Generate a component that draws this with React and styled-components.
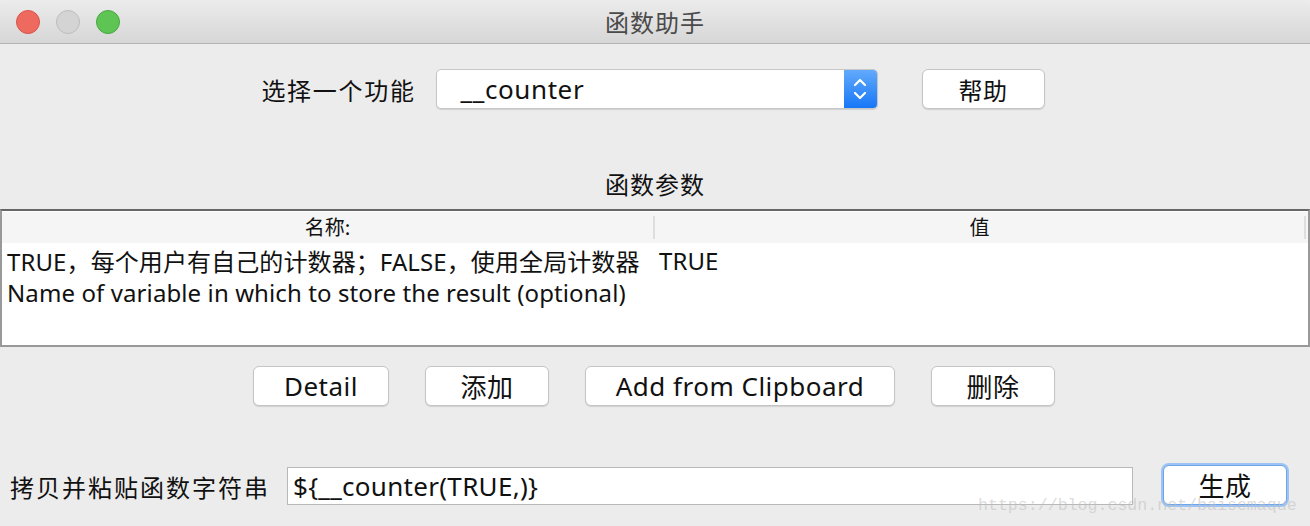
import React from "react";
import styled, { createGlobalStyle } from "styled-components";

const Global = createGlobalStyle`
  html, body { margin: 0; padding: 0; background: #ececec; }
  body { font-family: "Noto Sans CJK SC", "Noto Sans", sans-serif; }
`;

const Window = styled.div`
  position: relative;
  width: 1310px;
  height: 526px;
  background: #ececec;
  overflow: hidden;
  display: flex;
  flex-direction: column;
  color: #111;
  font-family: "Noto Sans CJK SC", "Noto Sans", sans-serif;
`;

const TitleBar = styled.div`
  height: 43px;
  flex: none;
  display: flex;
  align-items: center;
  justify-content: center;
  position: relative;
  background: linear-gradient(#ececec, #d6d6d6);
  border-bottom: 1px solid #b3b3b3;
  border-radius: 6px 6px 0 0;
`;

const Lights = styled.div`
  position: absolute;
  left: 16px;
  top: 10px;
  display: flex;
  gap: 16px;
`;

const Light = styled.span`
  width: 24px;
  height: 24px;
  border-radius: 50%;
  box-sizing: border-box;
  background: ${p => p.$bg};
  border: 1px solid ${p => p.$bd};
`;

const Title = styled.div`
  font-size: 24px;
  color: #4a4a4a;
  letter-spacing: 1px;
`;

const TopRow = styled.div`
  margin-top: 25px;
  height: 40px;
  display: flex;
  align-items: center;
  justify-content: center;
  padding-right: 4px;
`;

const Label = styled.span`
  font-size: 24px;
  letter-spacing: ${p => p.$ls || 1.7}px;
  white-space: nowrap;
`;

const Select = styled.div`
  margin-left: 20px;
  width: 442px;
  height: 40px;
  box-sizing: border-box;
  background: #fff;
  border: 1px solid #c6c6c6;
  border-radius: 5px;
  box-shadow: 0 1px 1px rgba(0,0,0,0.12);
  display: flex;
  align-items: center;
  overflow: hidden;
`;

const SelectText = styled.span`
  flex: 1;
  padding-left: 24px;
  font-size: 26px;
  letter-spacing: 0.6px;
  font-family: "Noto Sans", sans-serif;
`;

const Stepper = styled.span`
  width: 33px;
  height: 100%;
  background: linear-gradient(#62aafc, #1877f7);
  display: flex;
  align-items: center;
  justify-content: center;
`;

const PushButton = styled.button`
  height: 40px;
  width: ${p => p.$w}px;
  box-sizing: border-box;
  background: #fff;
  border: 1px solid #c4c4c4;
  border-radius: 6px;
  box-shadow: 0 1px 1px rgba(0,0,0,0.12);
  font-family: "Noto Sans", "Noto Sans CJK SC", sans-serif;
  font-size: 26px;
  letter-spacing: 0.5px;
  color: #111;
  padding: 0;
  display: flex;
  align-items: center;
  justify-content: center;
  ${p => p.$focus && `
    border: 1px solid #6ea4ea;
    box-shadow: 0 0 0 2px #9cc3f2;
  `}
`;

const HelpButton = styled(PushButton)`
  margin-left: 44px;
  font-size: 24px;
`;

const Section = styled.div`
  margin-top: 60px;
  text-align: center;
  font-size: 24px;
  letter-spacing: 1px;
  line-height: 30px;
`;

const Table = styled.div`
  margin-top: 10px;
  height: 138px;
  box-sizing: border-box;
  border: 2px solid #999;
  border-top-color: #666;
  background: #fff;
  display: flex;
  flex-direction: column;
`;

const Head = styled.div`
  display: grid;
  grid-template-columns: 653px 1fr;
  height: 31px;
  margin-top: 1px;
  background: #f5f5f5;
`;

const HeadCell = styled.div`
  display: flex;
  align-items: flex-start;
  justify-content: center;
  font-size: 20px;
  line-height: 22px;
  box-sizing: border-box;
  border-right: 2px solid #dedede;
  margin: 4px 0;
  ${p => p.$last && `margin-right: 2px;`}
`;

const Row = styled.div`
  display: grid;
  grid-template-columns: 653px 1fr;
  height: 32px;
  padding-top: 2px;
  box-sizing: border-box;
  align-items: center;
  font-size: 24px;
  letter-spacing: 0.1px;
  font-family: "Noto Sans", "Noto Sans CJK SC", sans-serif;
`;

const Cell = styled.div`
  padding-left: ${p => p.$pl}px;
  white-space: nowrap;
  overflow: hidden;
`;

const ButtonRow = styled.div`
  margin-top: 19px;
  display: flex;
  justify-content: center;
  gap: 36px;
  padding-right: 2px;
`;

const BottomRow = styled.div`
  margin-top: 61px;
  display: flex;
  align-items: center;
  padding-left: 10px;
`;

const TextField = styled.div`
  margin-left: 17px;
  width: 846px;
  height: 38px;
  box-sizing: border-box;
  background: #fff;
  border: 1px solid #b8b8b8;
  display: flex;
  align-items: center;
  padding-left: 5px;
  font-size: 26px;
  letter-spacing: 0.3px;
  font-family: "Noto Sans", sans-serif;
`;

const GenButton = styled(PushButton)`
  margin-left: 30px;
  margin-top: -2px;
`;

const Watermark = styled.div`
  position: absolute;
  left: 978px;
  top: 496px;
  font-family: "Liberation Mono", monospace;
  font-size: 16.6px;
  color: rgba(190, 190, 190, 0.55);
  white-space: nowrap;
  pointer-events: none;
`;

export default function App() {
  return (
    <>
      <Global />
      <Window>
        <TitleBar>
          <Lights>
            <Light $bg="#ee6a5f" $bd="#d9534a" />
            <Light $bg="#d4d4d4" $bd="#bdbdbd" />
            <Light $bg="#5ec454" $bd="#48a83f" />
          </Lights>
          <Title>函数助手</Title>
        </TitleBar>
        <TopRow>
          <Label>选择一个功能</Label>
          <Select>
            <SelectText>__counter</SelectText>
            <Stepper>
              <svg width="16" height="26" viewBox="0 0 16 26" fill="none" stroke="#fff" strokeWidth="2.2" strokeLinecap="round" strokeLinejoin="round">
                <path d="M3 9 L8 4 L13 9" />
                <path d="M3 17 L8 22 L13 17" />
              </svg>
            </Stepper>
          </Select>
          <HelpButton $w={123}>帮助</HelpButton>
        </TopRow>
        <Section>函数参数</Section>
        <Table>
          <Head>
            <HeadCell>名称:</HeadCell>
            <HeadCell $last>值</HeadCell>
          </Head>
          <Row>
            <Cell $pl={5}>TRUE，每个用户有自己的计数器；FALSE，使用全局计数器</Cell>
            <Cell $pl={4}>TRUE</Cell>
          </Row>
          <Row>
            <Cell $pl={5}>Name of variable in which to store the result (optional)</Cell>
            <Cell $pl={4}></Cell>
          </Row>
        </Table>
        <ButtonRow>
          <PushButton $w={136}>Detail</PushButton>
          <PushButton $w={124}>添加</PushButton>
          <PushButton $w={310}>Add from Clipboard</PushButton>
          <PushButton $w={124}>删除</PushButton>
        </ButtonRow>
        <BottomRow>
          <Label $ls={2}>拷贝并粘贴函数字符串</Label>
          <TextField>{"${__counter(TRUE,)}"}</TextField>
          <GenButton $w={124} $focus>生成</GenButton>
        </BottomRow>
        <Watermark>https://blog.csdn.net/baisemaque</Watermark>
      </Window>
    </>
  );
}
